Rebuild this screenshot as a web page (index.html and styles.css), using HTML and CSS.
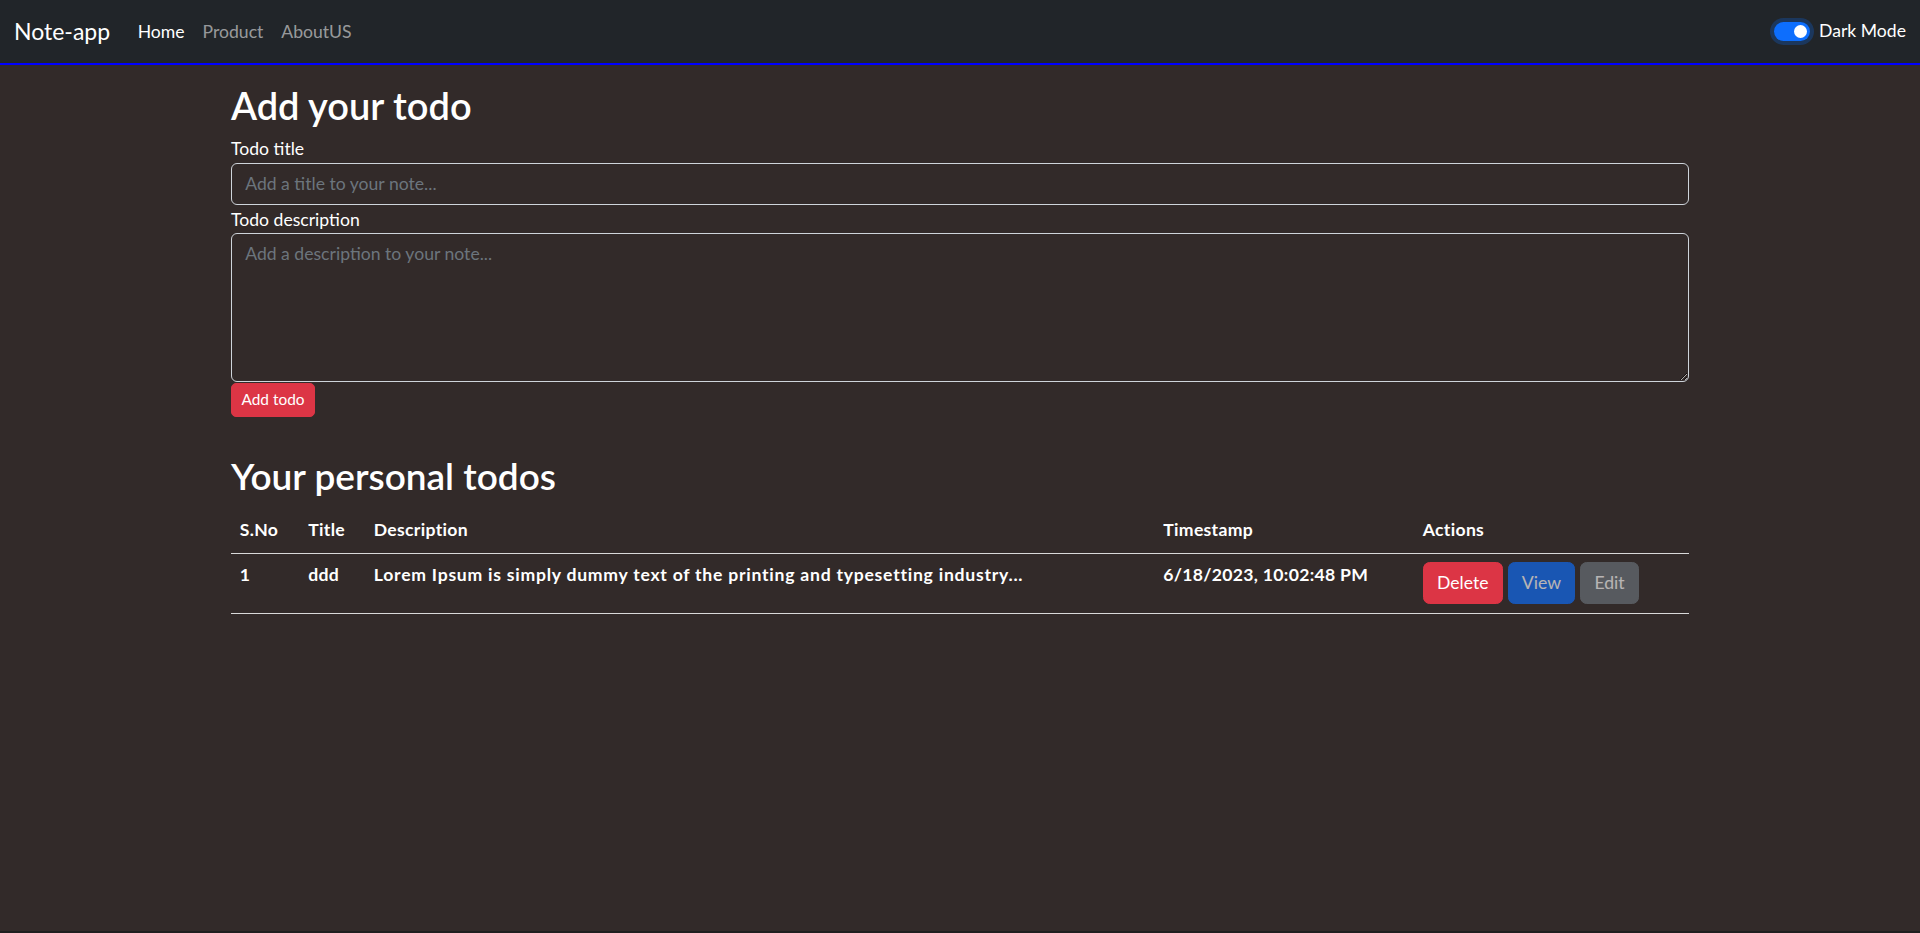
FILE: index.html
```html
<!DOCTYPE html>
<html lang="en">
<head>
<meta charset="utf-8">
<title>Note-app</title>
<link rel="stylesheet" href="styles.css">
</head>
<body>
<nav class="navbar">
  <div class="nav-left">
    <a class="brand" href="#">Note-app</a>
    <ul class="nav-links">
      <li><a class="nav-link active" href="#">Home</a></li>
      <li><a class="nav-link" href="#">Product</a></li>
      <li><a class="nav-link" href="#">AboutUS</a></li>
    </ul>
  </div>
  <div class="mode-switch">
    <span class="switch"><span class="knob"></span></span>
    <span class="switch-label">Dark Mode</span>
  </div>
</nav>
<main class="container">
  <h1 class="title-main">Add your todo</h1>
  <form class="todo-form">
    <label class="form-label" for="title">Todo title</label>
    <input id="title" class="form-control" type="text" placeholder="Add a title to your note...">
    <label class="form-label" for="desc">Todo description</label>
    <textarea id="desc" class="form-control textarea" placeholder="Add a description to your note..."></textarea>
    <button type="button" class="btn btn-sm btn-danger">Add todo</button>
  </form>
  <h2 class="title-sub">Your personal todos</h2>
  <table class="todo-table">
    <colgroup>
      <col class="c-no">
      <col class="c-title">
      <col class="c-desc">
      <col class="c-time">
      <col class="c-act">
    </colgroup>
    <thead>
      <tr>
        <th>S.No</th>
        <th>Title</th>
        <th>Description</th>
        <th>Timestamp</th>
        <th>Actions</th>
      </tr>
    </thead>
    <tbody>
      <tr>
        <td>1</td>
        <td>ddd</td>
        <td class="desc-cell">Lorem Ipsum is simply dummy text of the printing and typesetting industry...</td>
        <td>6/18/2023, 10:02:48 PM</td>
        <td>
          <div class="actions">
            <button type="button" class="btn btn-danger">Delete</button>
            <button type="button" class="btn btn-primary" disabled>View</button>
            <button type="button" class="btn btn-secondary" disabled>Edit</button>
          </div>
        </td>
      </tr>
    </tbody>
  </table>
</main>
</body>
</html>
```

FILE: styles.css
```css
html {
  background: #1f1f1f;
}

body {
  margin: 0;
  min-height: 931px;
  background: #322a29;
  color: #fff;
  font-family: Lato, "Liberation Sans", sans-serif;
  font-size: 17.6px;
  line-height: 1.5;
}

/* Navbar */
.navbar {
  height: 63px;
  background: #212529;
  border-bottom: 2px solid #0000ff;
  display: flex;
  align-items: center;
  justify-content: space-between;
  padding: 0 14px;
}

.nav-left {
  display: flex;
  align-items: center;
}

.brand {
  font-size: 23px;
  color: #fff;
  text-decoration: none;
  margin-right: 18.5px;
}

.nav-links {
  display: flex;
  list-style: none;
  margin: 0;
  padding: 0;
}

.nav-link {
  display: block;
  padding: 9px 9px 7px;
  color: rgba(255, 255, 255, 0.55);
  text-decoration: none;
  font-size: 17.6px;
}

.nav-link.active {
  color: #fff;
}

.mode-switch {
  display: flex;
  align-items: center;
  gap: 9px;
}

.switch {
  display: flex;
  align-items: center;
  justify-content: flex-end;
  box-sizing: border-box;
  width: 36px;
  height: 19px;
  padding: 0 3px;
  border-radius: 10px;
  background: #0d6efd;
  box-shadow: 0 0 0 4px rgba(13, 110, 253, 0.25);
}

.knob {
  width: 13px;
  height: 13px;
  border-radius: 50%;
  background: #fff;
}

.switch-label {
  font-size: 17.6px;
}

/* Main */
.container {
  width: 1458px;
  margin: 0 auto;
  padding-top: 18px;
}

.title-main {
  font-size: 38px;
  font-weight: 600;
  line-height: 1.2;
  margin: 0 0 5.6px;
}

.todo-form {
  display: flex;
  flex-direction: column;
  align-items: flex-start;
}

.form-label {
  display: block;
  padding-top: 2px;
  margin: 0;
}

.form-control {
  display: block;
  width: 100%;
  box-sizing: border-box;
  height: 42px;
  padding: 6.6px 13.2px;
  font: inherit;
  color: #fff;
  background: transparent;
  border: 1px solid #ced4da;
  border-radius: 6px;
  outline: none;
}

.form-control::placeholder {
  color: #6c757d;
}

.textarea {
  height: 149px;
  resize: vertical;
  margin-bottom: 1px;
}

.btn {
  font-family: inherit;
  font-size: 17.6px;
  line-height: 1.5;
  padding: 6.6px 13.2px;
  border: 1px solid transparent;
  border-radius: 6.6px;
  color: #fff;
  cursor: pointer;
}

.btn-sm {
  font-size: 15.4px;
  padding: 4.4px 9.5px;
  border-radius: 5px;
}

.btn-danger {
  background: #dc3545;
  border-color: #dc3545;
}

.btn-primary {
  background: #0d6efd;
  border-color: #0d6efd;
}

.btn-secondary {
  background: #6c757d;
  border-color: #6c757d;
}

.btn:disabled {
  opacity: 0.65;
  cursor: default;
}

.title-sub {
  font-size: 37px;
  font-weight: 600;
  line-height: 1.2;
  margin: 37.4px 0 9.9px;
}

/* Table */
.todo-table {
  width: 100%;
  border-collapse: collapse;
  table-layout: fixed;
}

.c-no { width: 68.5px; }
.c-title { width: 65.5px; }
.c-desc { width: 789.5px; }
.c-time { width: 259.5px; }
.c-act { width: 275px; }

.todo-table th,
.todo-table td {
  padding: 8.8px;
  text-align: left;
  vertical-align: top;
  font-weight: 700;
  line-height: 26.4px;
  letter-spacing: 0.3px;
  border-bottom: 1px solid #d9d9d9;
}

.todo-table .desc-cell {
  letter-spacing: 0.75px;
}

.actions {
  display: flex;
  gap: 5px;
  letter-spacing: normal;
}
```
